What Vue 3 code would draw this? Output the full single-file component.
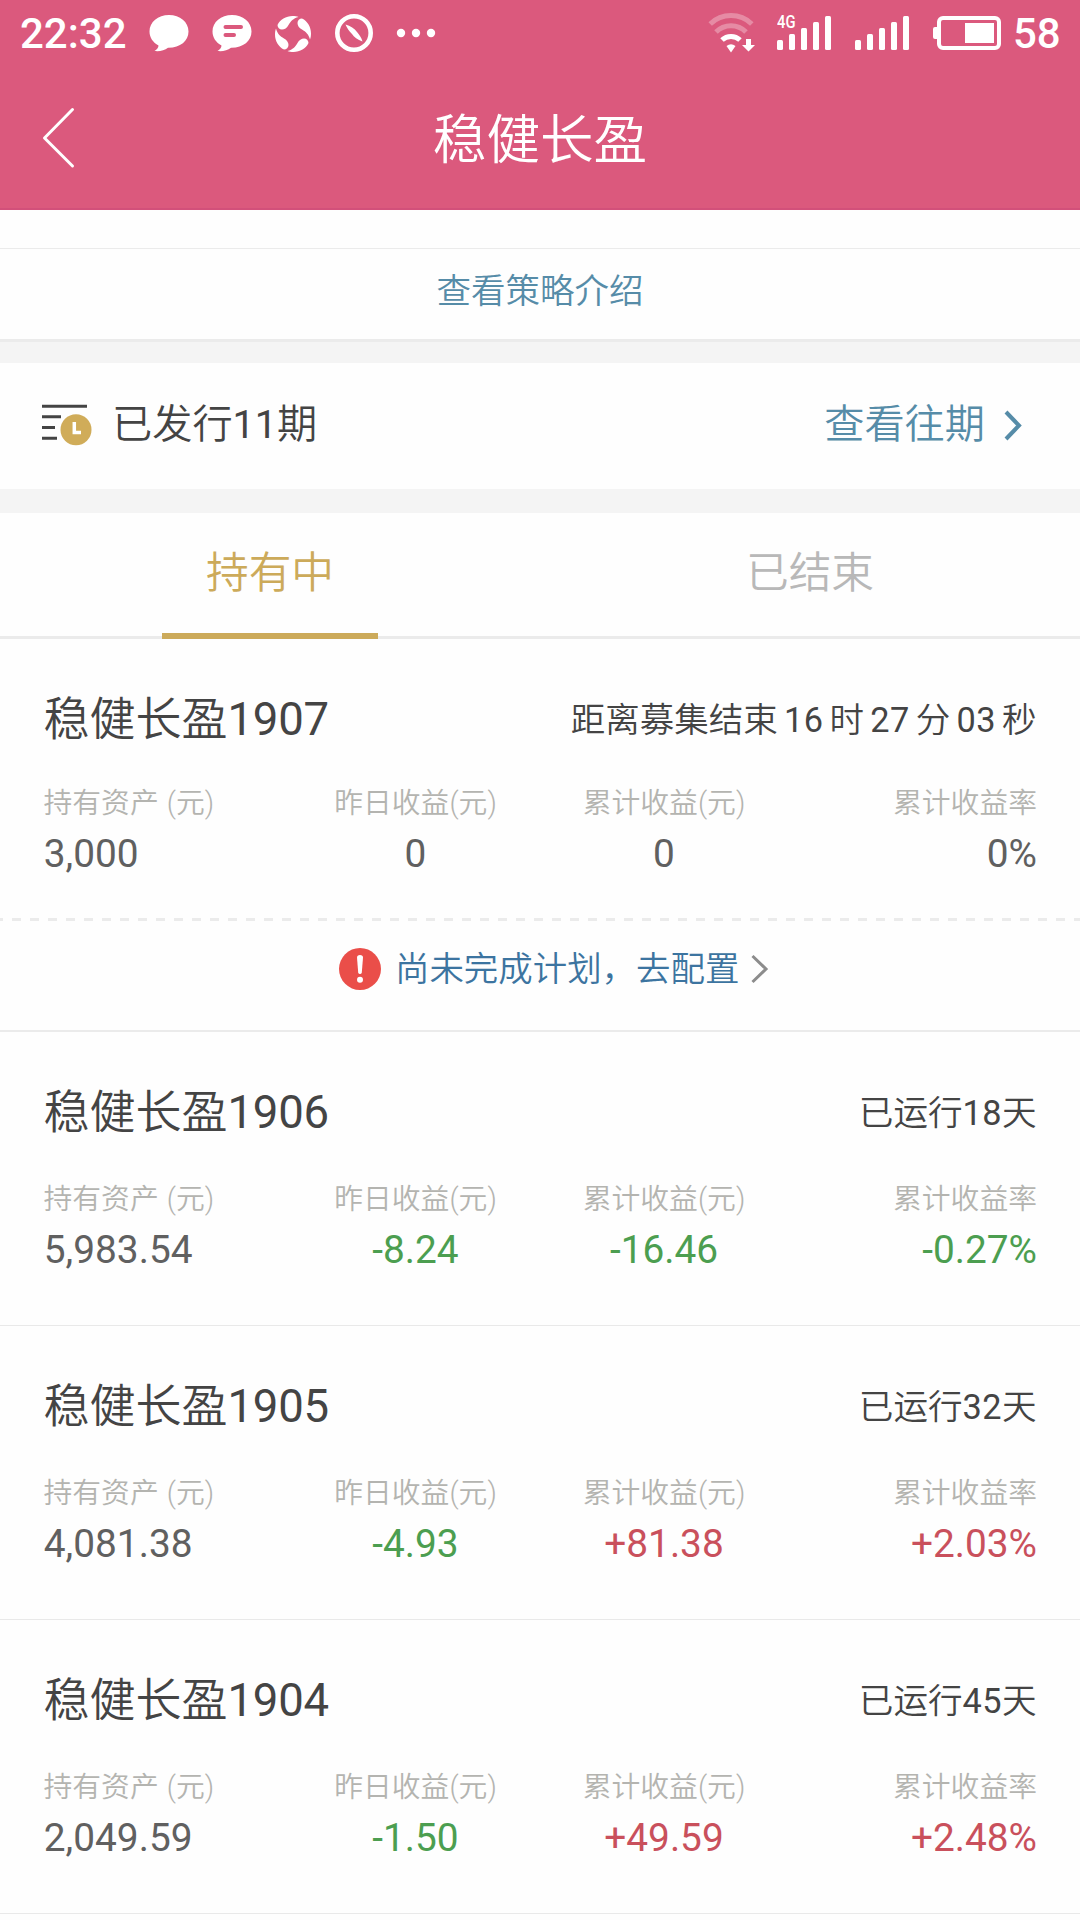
<script setup>
const plans = [
  {
    name: '稳健长盈', no: '1907', countdown: true, pending: true,
    status: [['距离募集结束'], ['16', 1], ['时'], ['27', 1], ['分'], ['03', 1], ['秒']],
    hold: '3,000', day: '0', total: '0', rate: '0%'
  },
  {
    name: '稳健长盈', no: '1906', status: [['已运行'], ['18', 1], ['天']],
    hold: '5,983.54', day: '-8.24', total: '-16.46', rate: '-0.27%'
  },
  {
    name: '稳健长盈', no: '1905', status: [['已运行'], ['32', 1], ['天']],
    hold: '4,081.38', day: '-4.93', total: '+81.38', rate: '+2.03%'
  },
  {
    name: '稳健长盈', no: '1904', status: [['已运行'], ['45', 1], ['天']],
    hold: '2,049.59', day: '-1.50', total: '+49.59', rate: '+2.48%'
  }
]
const tone = (v) => (v[0] === '-' ? 'down' : v[0] === '+' ? 'up' : '')
const bars = [0, 1, 2, 3, 4]
const quarters = [0, 90, 180, 270]
</script>

<template>
  <div class="screen">
    <header class="header">
      <div class="status-bar">
        <span class="clock">22:32</span>
        <svg class="bubble" width="40" height="38" viewBox="0 0 40 38">
          <path fill="#fff" d="M20 1C9 1 .5 8 .5 17.500c0 6 3.500 11 9 14C9.500 33.500 8 35.500 5.500 37c5 .6 10-.5 13.500-3.200C31 34 39.500 27 39.500 17.500S31 1 20 1z" />
        </svg>
        <svg class="bubble" width="40" height="38" viewBox="0 0 40 38">
          <path fill="#fff" d="M20 1C9 1 .5 8 .5 17.500c0 6 3.500 11 9 14C9.500 33.500 8 35.500 5.500 37c5 .6 10-.5 13.500-3.200C31 34 39.500 27 39.500 17.500S31 1 20 1z" />
          <path stroke="#db597d" stroke-width="4" stroke-linecap="round" d="M13.500 13h15.500M13.500 21h8.500" />
        </svg>
        <svg class="swirl" width="38" height="38" viewBox="0 0 38 38">
          <path v-for="a in quarters" :key="a" :transform="`rotate(${a} 19 19)`" fill="#fff" d="M3.500 10C6 4.500 12 1 18.500 1c2.500 0 4.500.4 6 1C19 3.500 17 6 14.500 10c-1.500 3-4 4.500-6.500 4.500S3.500 12.500 3.500 10z" />
        </svg>
        <svg class="compass" width="38" height="38" viewBox="0 0 38 38">
          <circle cx="19" cy="19" r="16.700" fill="none" stroke="#fff" stroke-width="4.600" />
          <path fill="#fff" d="M10.500 10.500c5 1.500 9 4 11.500 7.500 2.500 3 4.500 5.500 5.500 9.500-5-1.500-8.500-4.500-10.500-7.500-3-3-5-6-6.500-9.500z" />
        </svg>
        <svg class="dots" width="40" height="10" viewBox="0 0 40 10">
          <g fill="#fff"><circle cx="5" cy="5" r="4.200" /><circle cx="20" cy="5" r="4.200" /><circle cx="35" cy="5" r="4.200" /></g>
        </svg>
        <div class="grow"></div>
        <svg class="wifi" width="48" height="40" viewBox="0 0 48 40">
          <g fill="none" stroke="#fff">
            <path opacity=".3" stroke-width="5" d="M2.200 11A30 30 0 0 1 43.800 11" />
            <path opacity=".3" stroke-width="5" d="M8 19A21 21 0 0 1 38 19" />
            <path stroke-width="5" d="M14 27A13 13 0 0 1 32 27" />
          </g>
          <path fill="#fff" d="M18.500 33q4.500-3.500 9 0l-4.500 6.500zM38 26h5v6h4l-6.500 6.500-6.500-6.500h4z" />
        </svg>
        <svg class="signal" width="54" height="52" viewBox="0 -8 54 52">
          <rect v-for="i in bars" :key="i" :x="i * 12" :y="25 - i * 6" width="6" :height="10 + i * 6" rx="1.500" fill="#fff" />
          <text x="0" y="13" textLength="18.500" lengthAdjust="spacingAndGlyphs" class="net">4G</text>
        </svg>
        <svg class="signal" width="54" height="52" viewBox="0 -8 54 52">
          <rect v-for="i in bars" :key="i" :x="i * 12" :y="25 - i * 6" width="6" :height="10 + i * 6" rx="1.500" fill="#fff" />
        </svg>
        <svg class="battery" width="68" height="34" viewBox="0 0 68 34">
          <rect x="6" y="2" width="60" height="30" rx="4" fill="none" stroke="#fff" stroke-width="4" />
          <rect x="0" y="11" width="6" height="12" rx="2" fill="#fff" />
          <rect x="32" y="7" width="29" height="20" fill="#fff" />
        </svg>
        <span class="clock level">58</span>
      </div>
      <div class="nav">
        <svg class="back" width="34" height="62" viewBox="0 0 34 62">
          <path d="M31.500 2.500 3.500 31l28 28" fill="none" stroke="#fff" stroke-width="3" stroke-linecap="round" stroke-linejoin="round" />
        </svg>
        <h1>稳健长盈</h1>
      </div>
    </header>

    <div class="spacer"></div>
    <a class="strategy">查看策略介绍</a>
    <div class="band edged"></div>

    <section class="issued">
      <svg class="history" width="50" height="44" viewBox="0 0 50 44">
        <path stroke="#444" stroke-width="3" d="M0 3.200h45M0 13.800h19M0 24.500h13M0 35.200h15" />
        <circle cx="34" cy="26.700" r="15.500" fill="#d0ac59" />
        <path d="M32.300 19v10.500h6.700" fill="none" stroke="#fff" stroke-width="3.500" />
      </svg>
      <span class="issued-text">已发行<b>11</b>期</span>
      <a class="past">查看往期</a>
      <svg class="chev" width="20" height="32" viewBox="0 0 20 32">
        <path d="M2 2 15 15.500 2 29" fill="none" stroke="#568ca8" stroke-width="4" />
      </svg>
    </section>
    <div class="band"></div>

    <nav class="tabs">
      <div class="tab active">持有中</div>
      <div class="tab">已结束</div>
    </nav>

    <template v-for="p in plans" :key="p.no">
      <section class="plan" :class="{ first: p.pending }">
        <div class="plan-head">
          <h2>{{ p.name }}<b>{{ p.no }}</b></h2>
          <div class="state" :class="{ countdown: p.countdown }">
            <span v-for="(s, i) in p.status" :key="i" :class="{ num: s[1] }">{{ s[0] }}</span>
          </div>
        </div>
        <div class="figures">
          <div class="fig left"><label>持有资产 (元)</label><strong>{{ p.hold }}</strong></div>
          <div class="fig"><label>昨日收益(元)</label><strong :class="tone(p.day)">{{ p.day }}</strong></div>
          <div class="fig"><label>累计收益(元)</label><strong :class="tone(p.total)">{{ p.total }}</strong></div>
          <div class="fig right"><label>累计收益率</label><strong :class="tone(p.rate)">{{ p.rate }}</strong></div>
        </div>
      </section>
      <div v-if="p.pending" class="notice">
        <svg width="42" height="42" viewBox="0 0 42 42">
          <circle cx="21" cy="21" r="21" fill="#ea4e49" />
          <path fill="#fff" d="M18 9.500q0-2.500 3-2.500t3 2.500l-1.200 15q-.3 1.500-1.800 1.500t-1.800-1.500z" />
          <circle cx="21" cy="31.800" r="3" fill="#fff" />
        </svg>
        <span>尚未完成计划，去配置</span>
        <svg class="go" width="20" height="30" viewBox="0 0 20 30">
          <path d="M2.500 2 16 15 2.500 28" fill="none" stroke="#8c8c8c" stroke-width="3" />
        </svg>
      </div>
    </template>
  </div>
</template>

<style>
body { margin: 0; background: #fefefe; }
</style>

<style scoped>
.screen {
  width: 1080px; height: 1920px; overflow: hidden; background: #fefefe; color: #444;
  font-family: Roboto, "Noto Sans CJK SC", sans-serif; font-weight: 350;
}
svg { display: block; flex: none; }
b { font-weight: 400; }
.header { box-sizing: border-box; height: 210px; background: #db597d; border-bottom: 2px solid #d2507a; color: #fff; }
.status-bar { display: flex; height: 66px; align-items: center; padding: 0 21px 0 20px; }
.clock { font-size: 42px; font-weight: 500; line-height: 66px; width: 108px; white-space: nowrap; padding-top: 2px; }
.bubble { margin-left: 20.500px; }
.bubble + .bubble { margin-left: 23px; }
.swirl { margin: 2px 0 0 22.500px; }
.compass { margin-left: 23px; }
.dots { margin-left: 23px; }
.grow { flex: 1; }
.wifi { margin-right: 21px; }
.signal { margin-right: 24px; }
.net { font: 500 17.500px Roboto, sans-serif; fill: #fff; }
.level { width: 46px; margin-left: 12.500px; }
.nav { display: flex; align-items: center; height: 144px; padding: 0 41px; }
h1 { flex: 1; margin: 0 34px 0 0; padding-top: 6px; text-align: center; font-size: 53.600px; line-height: 138px; font-weight: 350; }
.spacer { height: 38px; border-bottom: 1px solid #ebebeb; }
.strategy { display: block; height: 90px; line-height: 84px; text-align: center; font-size: 34.500px; color: #568ca8; }
.band { height: 24px; background: #f4f4f4; }
.edged { box-sizing: border-box; border-top: 3px solid #ebebeb; }
.issued { display: flex; align-items: center; height: 126px; padding: 0 56px 0 42px; font-size: 40.200px; }
.issued b { font-size: 39.500px; }
.history { margin-top: -3px; }
.issued-text { flex: 1; margin-left: 20px; line-height: 120px; padding-bottom: 2px; }
.past { color: #568ca8; line-height: 120px; padding-bottom: 2px; }
.chev { margin-left: 19px; margin-top: -1px; }
.tabs { display: flex; height: 123px; border-bottom: 3px solid #ebebeb; }
.tab { flex: 1; display: flex; flex-direction: column; align-items: center; font-size: 42.700px; line-height: 121px; color: #b8b8b8; height: 123px; }
.active { color: #ccaa5a; }
.active::after { content: ""; flex: none; width: 216px; height: 6px; margin-top: -1px; background: #ccaa5a; }
.plan { box-sizing: border-box; height: 294px; padding: 50px 43px 0 43px; border-bottom: 1px solid #e9e9e9; }
.plan-head { display: flex; justify-content: space-between; height: 60px; line-height: 60px; }
h2 { margin: 0 0 0 .5px; font-size: 46px; font-weight: 350; }
h2 b { font-size: 45.500px; letter-spacing: -.2px; }
.state { display: flex; margin-right: .5px; font-size: 34.600px; line-height: 62px; }
.num { font-weight: 400; font-size: 34.300px; letter-spacing: .4px; }
.countdown { font-size: 34.500px; }
.countdown .num { margin: 0 6.200px; }
.figures { display: grid; grid-template-columns: 289.500px 166px 331px 207.500px; margin-top: 37px; }
.fig { display: flex; flex-direction: column; align-items: center; white-space: nowrap; }
.left { align-items: flex-start; }
.left label { margin-left: .5px; }
.left strong { margin-left: .8px; }
.right { align-items: flex-end; }
label { font-size: 28.800px; line-height: 40px; color: #b4b4b0; word-spacing: 1px; }
strong { margin-top: 6px; font-size: 38.800px; line-height: 50px; font-weight: 400; color: #606060; }
.up { color: #c9505c; }
.down { color: #4c9e50; }
.first {
  height: 282px; border: 0;
  background: repeating-linear-gradient(90deg, #ebebeb 0 3px, transparent 3px 12px, #ebebeb 12px 18px) 0 100% / 100% 3px no-repeat;
}
.first .figures { margin-top: 34px; }
.notice {
  box-sizing: border-box; display: flex; height: 111px; padding: 27px 0 0 339px; border-bottom: 2px solid #ebebeb;
  font-size: 34.450px; line-height: 42px; color: #3c74a0;
}
.notice span { margin-left: 14px; }
.go { margin: 6px 0 0 11px; }
</style>
